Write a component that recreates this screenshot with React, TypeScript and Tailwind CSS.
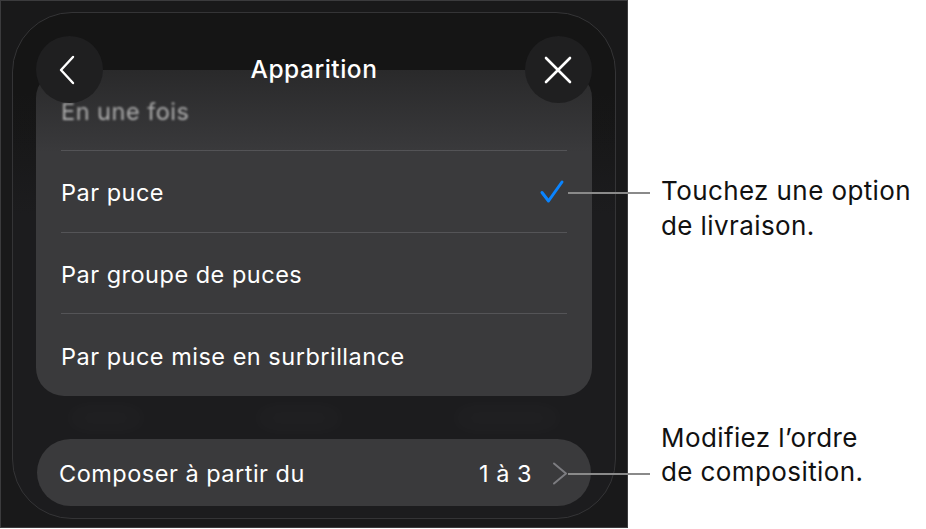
import React from "react";

const rows = [
  { label: "Par puce", checked: true, h: "h-[82px]" },
  { label: "Par groupe de puces", checked: false, h: "h-[81px]" },
  { label: "Par puce mise en surbrillance", checked: false, h: "h-[82px]", last: true },
];

function CircleButton({ children }: { children: React.ReactNode }) {
  return (
    <div className="flex h-[67px] w-[67px] items-center justify-center rounded-full bg-[#1f1f20]">
      {children}
    </div>
  );
}

export default function App() {
  return (
    <div
      className="relative flex h-[529px] w-[926px] bg-white"
      style={{ fontFamily: "Inter, 'Noto Sans', sans-serif" }}
    >
      {/* phone screen */}
      <div className="h-[528px] w-[628px] shrink-0 border border-[#3b3b3d] bg-[#19191a] p-[11px]">
        <div className="relative h-[507px] overflow-hidden rounded-[60px] border border-[#343436] bg-[linear-gradient(to_bottom,#151515_0px,#151515_80px,#1c1c1e_200px)] px-[23px] pt-[57px]">
          {/* options list */}
          <div className="overflow-hidden rounded-[28px] bg-[#3a3a3c] px-[25px] text-[23.5px] tracking-[0.5px]">
            <div className="flex h-[81px] items-center border-b border-[#545457]">
              <span className="pt-[3px] text-[#d6d6d6] blur-[1.2px]">En une fois</span>
            </div>
            {rows.map((r) => (
              <div
                key={r.label}
                className={`flex ${r.h} items-center justify-between ${r.last ? "" : "border-b border-[#545457]"}`}
              >
                <span className="pt-[3px] text-white">{r.label}</span>
                {r.checked && (
                  <svg width="26" height="26" viewBox="0 0 26 26" className="mr-[2px] mt-[1px]">
                    <path
                      d="M3 13.5 L9.5 22 L23 3"
                      fill="none"
                      stroke="#0a84ff"
                      strokeWidth="3"
                      strokeLinecap="round"
                      strokeLinejoin="round"
                    />
                  </svg>
                )}
              </div>
            ))}
          </div>

          {/* ghost content behind */}
          <div className="flex h-[43px] items-center justify-between px-[30px] opacity-60">
            <div className="h-[18px] w-[80px] rounded-full bg-white/5 blur-md" />
            <div className="h-[18px] w-[90px] rounded-full bg-white/5 blur-md" />
            <div className="h-[18px] w-[110px] rounded-full bg-white/5 blur-md" />
          </div>

          {/* compose row */}
          <div className="mx-[1px] flex h-[67px] items-center justify-between rounded-full bg-[#3a3a3c] pl-[22px] pr-[23px] text-[23.5px] tracking-[0.5px] text-white">
            <span className="pt-[3px]">Composer à partir du</span>
            <div className="flex items-center gap-[20px]">
              <span className="pt-[3px]">1 à 3</span>
              <svg width="16" height="24" viewBox="0 0 16 24" className="mt-[3px]">
                <path
                  d="M2 1.5 L14 11.5 L2 21.5"
                  fill="none"
                  stroke="#7c7c80"
                  strokeWidth="2"
                  strokeLinecap="round"
                  strokeLinejoin="round"
                />
              </svg>
            </div>
          </div>

          {/* header overlay */}
          <div className="pointer-events-none absolute inset-x-0 top-0 h-[150px] bg-[linear-gradient(to_bottom,rgba(21,21,21,0)_0px,rgba(21,21,21,0)_56px,rgba(21,21,21,0.45)_57px,rgba(21,21,21,0)_140px)]" />
          <div className="absolute inset-x-[23px] top-[23px] flex items-center justify-between">
            <CircleButton>
              <svg width="20" height="30" viewBox="0 0 20 30" className="mr-[4px]">
                <path
                  d="M15 2 L3 15 L15 28"
                  fill="none"
                  stroke="white"
                  strokeWidth="2.4"
                  strokeLinecap="round"
                  strokeLinejoin="round"
                />
              </svg>
            </CircleButton>
            <span className="text-[24.5px] font-medium tracking-[0.5px] text-white">Apparition</span>
            <CircleButton>
              <svg width="30" height="30" viewBox="0 0 30 30">
                <path
                  d="M3 3 L27 27 M27 3 L3 27"
                  fill="none"
                  stroke="white"
                  strokeWidth="2.6"
                  strokeLinecap="round"
                />
              </svg>
            </CircleButton>
          </div>
        </div>
      </div>

      {/* callouts */}
      <div className="flex flex-1 flex-col pl-[33px] text-[26px] leading-[35px] tracking-[0.4px] text-[#111]">
        <div className="mt-[173px]">
          Touchez une option
          <br />
          de livraison.
        </div>
        <div className="mt-[178px] leading-[34px]">
          Modifiez l’ordre
          <br />
          de composition.
        </div>
      </div>

      <div className="absolute left-[568px] top-[192px] h-[2px] w-[82px] bg-[#8a8a8a]" />
      <div className="absolute left-[568px] top-[473px] h-[2px] w-[82px] bg-[#8a8a8a]" />
    </div>
  );
}
